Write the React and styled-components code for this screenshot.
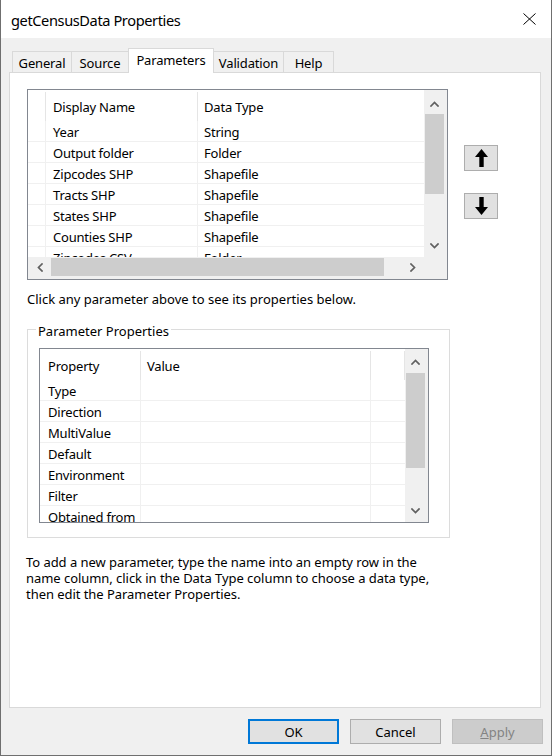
import React from "react";
import styled, { createGlobalStyle } from "styled-components";

const Global = createGlobalStyle`
  html, body { margin: 0; padding: 0; background: #f0f0f0; }
  body {
    font-family: "Noto Sans", "Open Sans", sans-serif;
    font-size: 13px;
    color: #000;
  }
  * { box-sizing: border-box; }
`;

const Window = styled.div`
  width: 552px;
  height: 756px;
  display: flex;
  flex-direction: column;
  background: #f0f0f0;
  border: 1px solid #6f6f6f;
  border-top: none;
  overflow: hidden;
`;

const TitleBar = styled.div`
  height: 38px;
  flex: none;
  background: #fff;
  display: flex;
  align-items: center;
  justify-content: space-between;
  padding: 0 15px 0 10px;
`;

const TitleText = styled.div`
  font-size: 14.6px;
  letter-spacing: -0.4px;
  padding-top: 2px;
`;

const Body = styled.div`
  flex: 1;
  display: flex;
  flex-direction: column;
  padding: 10px 10px 0 8px;
  min-height: 0;
`;

const TabStrip = styled.div`
  display: flex;
  align-items: flex-end;
  height: 25px;
  margin-bottom: -1px;
  padding-left: 3px;
  flex: none;
`;

const Tab = styled.div`
  position: relative;
  width: ${(p) => p.$w}px;
  height: ${(p) => (p.$active ? 25 : 22)}px;
  margin-left: ${(p) => (p.$first ? 0 : -1)}px;
  border: 1px solid #d9d9d9;
  border-bottom: ${(p) => (p.$active ? "none" : "1px solid #d9d9d9")};
  background: ${(p) => (p.$active ? "#fff" : "#f0f0f0")};
  z-index: ${(p) => (p.$active ? 2 : 1)};
  display: flex;
  align-items: ${(p) => (p.$active ? "flex-start" : "center")};
  justify-content: center;
  padding-top: ${(p) => (p.$active ? 2 : 1)}px;
  letter-spacing: -0.15px;
  white-space: nowrap;
`;

const Panel = styled.div`
  flex: 1;
  background: #fff;
  border: 1px solid #d9d9d9;
  display: flex;
  flex-direction: column;
  padding: 16px 17px 0;
  min-height: 0;
`;

const TopRow = styled.div`
  display: flex;
  gap: 16px;
`;

const ListBox = styled.div`
  width: ${(p) => p.$w}px;
  height: ${(p) => p.$h}px;
  border: 1px solid #828790;
  display: grid;
  grid-template-columns: 1fr 23px;
  grid-template-rows: ${(p) => (p.$hscroll ? "1fr 22px" : "1fr")};
  overflow: hidden;
  flex: none;
`;

const TableArea = styled.div`
  overflow: hidden;
  background: #fff;
  min-height: 0;
`;

const Row = styled.div`
  display: grid;
  grid-template-columns: ${(p) => p.$cols};
  height: ${(p) => p.$h}px;
`;

const HeadCell = styled.div`
  display: flex;
  align-items: center;
  padding: 0 0 0 ${(p) => p.$pad}px;
  margin-top: 2px;
  border-right: ${(p) => (p.$sep ? "1px solid #e5e5e5" : "none")};
  letter-spacing: -0.2px;
  white-space: nowrap;
`;

const Cell = styled.div`
  display: flex;
  align-items: center;
  padding: 2px 0 0 ${(p) => p.$pad}px;
  border-bottom: 1px solid #f0f0f0;
  border-right: ${(p) => (p.$sep ? "1px solid #f0f0f0" : "none")};
  letter-spacing: -0.2px;
  white-space: nowrap;
  overflow: hidden;
`;

const VScroll = styled.div`
  background: #f0f0f0;
  display: flex;
  flex-direction: column;
  min-height: 0;
`;

const HScroll = styled.div`
  background: #f0f0f0;
  display: flex;
  align-items: stretch;
`;

const Corner = styled.div`
  background: #f0f0f0;
`;

const ArrowBox = styled.div`
  flex: none;
  width: ${(p) => p.$w || "auto"};
  height: ${(p) => p.$h || "auto"};
  display: flex;
  align-items: center;
  justify-content: center;
  padding: ${(p) => p.$pad || "0"};
  margin-top: ${(p) => (p.$end ? "auto" : "0")};
  margin-left: ${(p) => (p.$endX ? "auto" : "0")};
`;

const VThumb = styled.div`
  flex: none;
  height: ${(p) => p.$len}px;
  margin: 1px 3px 0 1px;
  background: #cdcdcd;
`;

const HThumb = styled.div`
  flex: none;
  width: ${(p) => p.$len}px;
  margin: 1px 0 3px 0;
  background: #cdcdcd;
`;

const MoveColumn = styled.div`
  display: flex;
  flex-direction: column;
  gap: 22px;
  margin-top: 56px;
`;

const MoveButton = styled.button`
  width: 34px;
  height: 26px;
  padding: 0 0 0 1px;
  background: #e1e1e1;
  border: 1px solid #adadad;
  display: flex;
  align-items: center;
  justify-content: center;
`;

const Hint = styled.div`
  margin-top: 11px;
  line-height: 16px;
  white-space: nowrap;
`;

const GroupBox = styled.fieldset`
  width: 423px;
  margin: 12px 0 0;
  padding: 9px 20px 14px 11px;
  border: 1px solid #dcdcdc;
  min-width: 0;
`;

const GroupLegend = styled.legend`
  padding: 4px 2px 0;
  margin-left: -3px;
  line-height: 16px;
`;

const Note = styled.div`
  margin-top: 16px;
  margin-left: -1px;
  line-height: 16px;
  letter-spacing: -0.05px;
  white-space: nowrap;
`;

const Footer = styled.div`
  flex: none;
  display: flex;
  justify-content: flex-end;
  gap: 11px;
  height: 25px;
  margin: 11px -2px 11px 0;
`;

const DlgButton = styled.button`
  width: 91px;
  height: 25px;
  font-family: inherit;
  font-size: 13px;
  padding: 0;
  background: ${(p) => (p.$disabled ? "#cccccc" : "#e1e1e1")};
  color: ${(p) => (p.$disabled ? "#838383" : "#000")};
  border: ${(p) =>
    p.$default
      ? "2px solid #0078d7"
      : p.$disabled
      ? "1px solid #bfbfbf"
      : "1px solid #adadad"};
  u { text-decoration: underline; }
`;

const Chevron = ({ dir }) => {
  const paths = {
    up: "M1 5 L4.5 1.5 L8 5",
    down: "M1 1 L4.5 4.5 L8 1",
    left: "M5 1 L1.5 4.5 L5 8",
    right: "M1 1 L4.5 4.5 L1 8",
  };
  const horiz = dir === "left" || dir === "right";
  return (
    <svg
      width={horiz ? 6 : 9}
      height={horiz ? 9 : 6}
      viewBox={horiz ? "0 0 6 9" : "0 0 9 6"}
    >
      <path
        d={paths[dir]}
        fill="none"
        stroke="#606060"
        strokeWidth="1.7"
        strokeLinecap="square"
      />
    </svg>
  );
};

const BoldArrow = ({ down }) => (
  <svg width="13" height="18" viewBox="0 0 13 18">
    <polygon
      points="6.5,0 13,8 8.7,8 8.7,18 4.3,18 4.3,8 0,8"
      fill="#000"
      transform={down ? "rotate(180 6.5 9)" : undefined}
    />
  </svg>
);

const CloseIcon = () => (
  <svg width="13" height="12" viewBox="0 0 13 12">
    <path d="M0.5 0.5 L12.5 11.5 M12.5 0.5 L0.5 11.5" stroke="#000" strokeWidth="1" fill="none" />
  </svg>
);

const tabs = [
  { label: "General", w: 60 },
  { label: "Source", w: 58 },
  { label: "Parameters", w: 86, active: true },
  { label: "Validation", w: 71 },
  { label: "Help", w: 51 },
];

const params = [
  ["Year", "String"],
  ["Output folder", "Folder"],
  ["Zipcodes SHP", "Shapefile"],
  ["Tracts SHP", "Shapefile"],
  ["States SHP", "Shapefile"],
  ["Counties SHP", "Shapefile"],
  ["Zipcodes CSV", "Folder"],
];

const props = [
  "Type",
  "Direction",
  "MultiValue",
  "Default",
  "Environment",
  "Filter",
  "Obtained from",
];

const PARAM_COLS = "18px 152px 1fr";
const PROP_COLS = "101px 230px 1fr";

export default function App() {
  return (
    <>
      <Global />
      <Window>
        <TitleBar>
          <TitleText>getCensusData Properties</TitleText>
          <CloseIcon />
        </TitleBar>
        <Body>
          <TabStrip>
            {tabs.map((t, i) => (
              <Tab key={t.label} $w={t.w} $active={t.active} $first={i === 0}>
                {t.label}
              </Tab>
            ))}
          </TabStrip>
          <Panel>
            <TopRow>
              <ListBox $w={421} $h={191} $hscroll>
                <TableArea>
                  <Row $cols={PARAM_COLS} $h={31}>
                    <HeadCell $sep $pad={0} />
                    <HeadCell $sep $pad={7}>Display Name</HeadCell>
                    <HeadCell $pad={6}>Data Type</HeadCell>
                  </Row>
                  {params.map(([name, type]) => (
                    <Row key={name} $cols={PARAM_COLS} $h={21}>
                      <Cell $sep $pad={0} />
                      <Cell $sep $pad={7}>{name}</Cell>
                      <Cell $pad={6}>{type}</Cell>
                    </Row>
                  ))}
                </TableArea>
                <VScroll>
                  <ArrowBox $h="23px" $pad="5px 2px 0 0">
                    <Chevron dir="up" />
                  </ArrowBox>
                  <VThumb $len={80} />
                  <ArrowBox $h="22px" $end $pad="0 2px 0 0">
                    <Chevron dir="down" />
                  </ArrowBox>
                </VScroll>
                <HScroll>
                  <ArrowBox $w="23px" $pad="0 0 1px 0">
                    <Chevron dir="left" />
                  </ArrowBox>
                  <HThumb $len={333} />
                  <ArrowBox $w="22px" $endX $pad="0 0 1px 0">
                    <Chevron dir="right" />
                  </ArrowBox>
                </HScroll>
                <Corner />
              </ListBox>
              <MoveColumn>
                <MoveButton aria-label="Move up">
                  <BoldArrow />
                </MoveButton>
                <MoveButton aria-label="Move down">
                  <BoldArrow down />
                </MoveButton>
              </MoveColumn>
            </TopRow>
            <Hint>Click any parameter above to see its properties below.</Hint>
            <GroupBox>
              <GroupLegend>Parameter Properties</GroupLegend>
              <ListBox $w={390} $h={175}>
                <TableArea>
                  <Row $cols={PROP_COLS} $h={31}>
                    <HeadCell $sep $pad={8}>Property</HeadCell>
                    <HeadCell $sep $pad={6}>Value</HeadCell>
                    <HeadCell $sep $pad={0} />
                  </Row>
                  {props.map((p) => (
                    <Row key={p} $cols={PROP_COLS} $h={21}>
                      <Cell $sep $pad={8}>{p}</Cell>
                      <Cell $sep $pad={6} />
                      <Cell $pad={0} />
                    </Row>
                  ))}
                </TableArea>
                <VScroll>
                  <ArrowBox $h="23px" $pad="3px 2px 0 0">
                    <Chevron dir="up" />
                  </ArrowBox>
                  <VThumb $len={95} />
                  <ArrowBox $h="23px" $end $pad="0 2px 0 0">
                    <Chevron dir="down" />
                  </ArrowBox>
                </VScroll>
              </ListBox>
            </GroupBox>
            <Note>
              To add a new parameter, type the name into an empty row in the
              <br />
              name column, click in the Data Type column to choose a data type,
              <br />
              then edit the Parameter Properties.
            </Note>
          </Panel>
          <Footer>
            <DlgButton $default>OK</DlgButton>
            <DlgButton>Cancel</DlgButton>
            <DlgButton $disabled>
              <u>A</u>pply
            </DlgButton>
          </Footer>
        </Body>
      </Window>
    </>
  );
}
